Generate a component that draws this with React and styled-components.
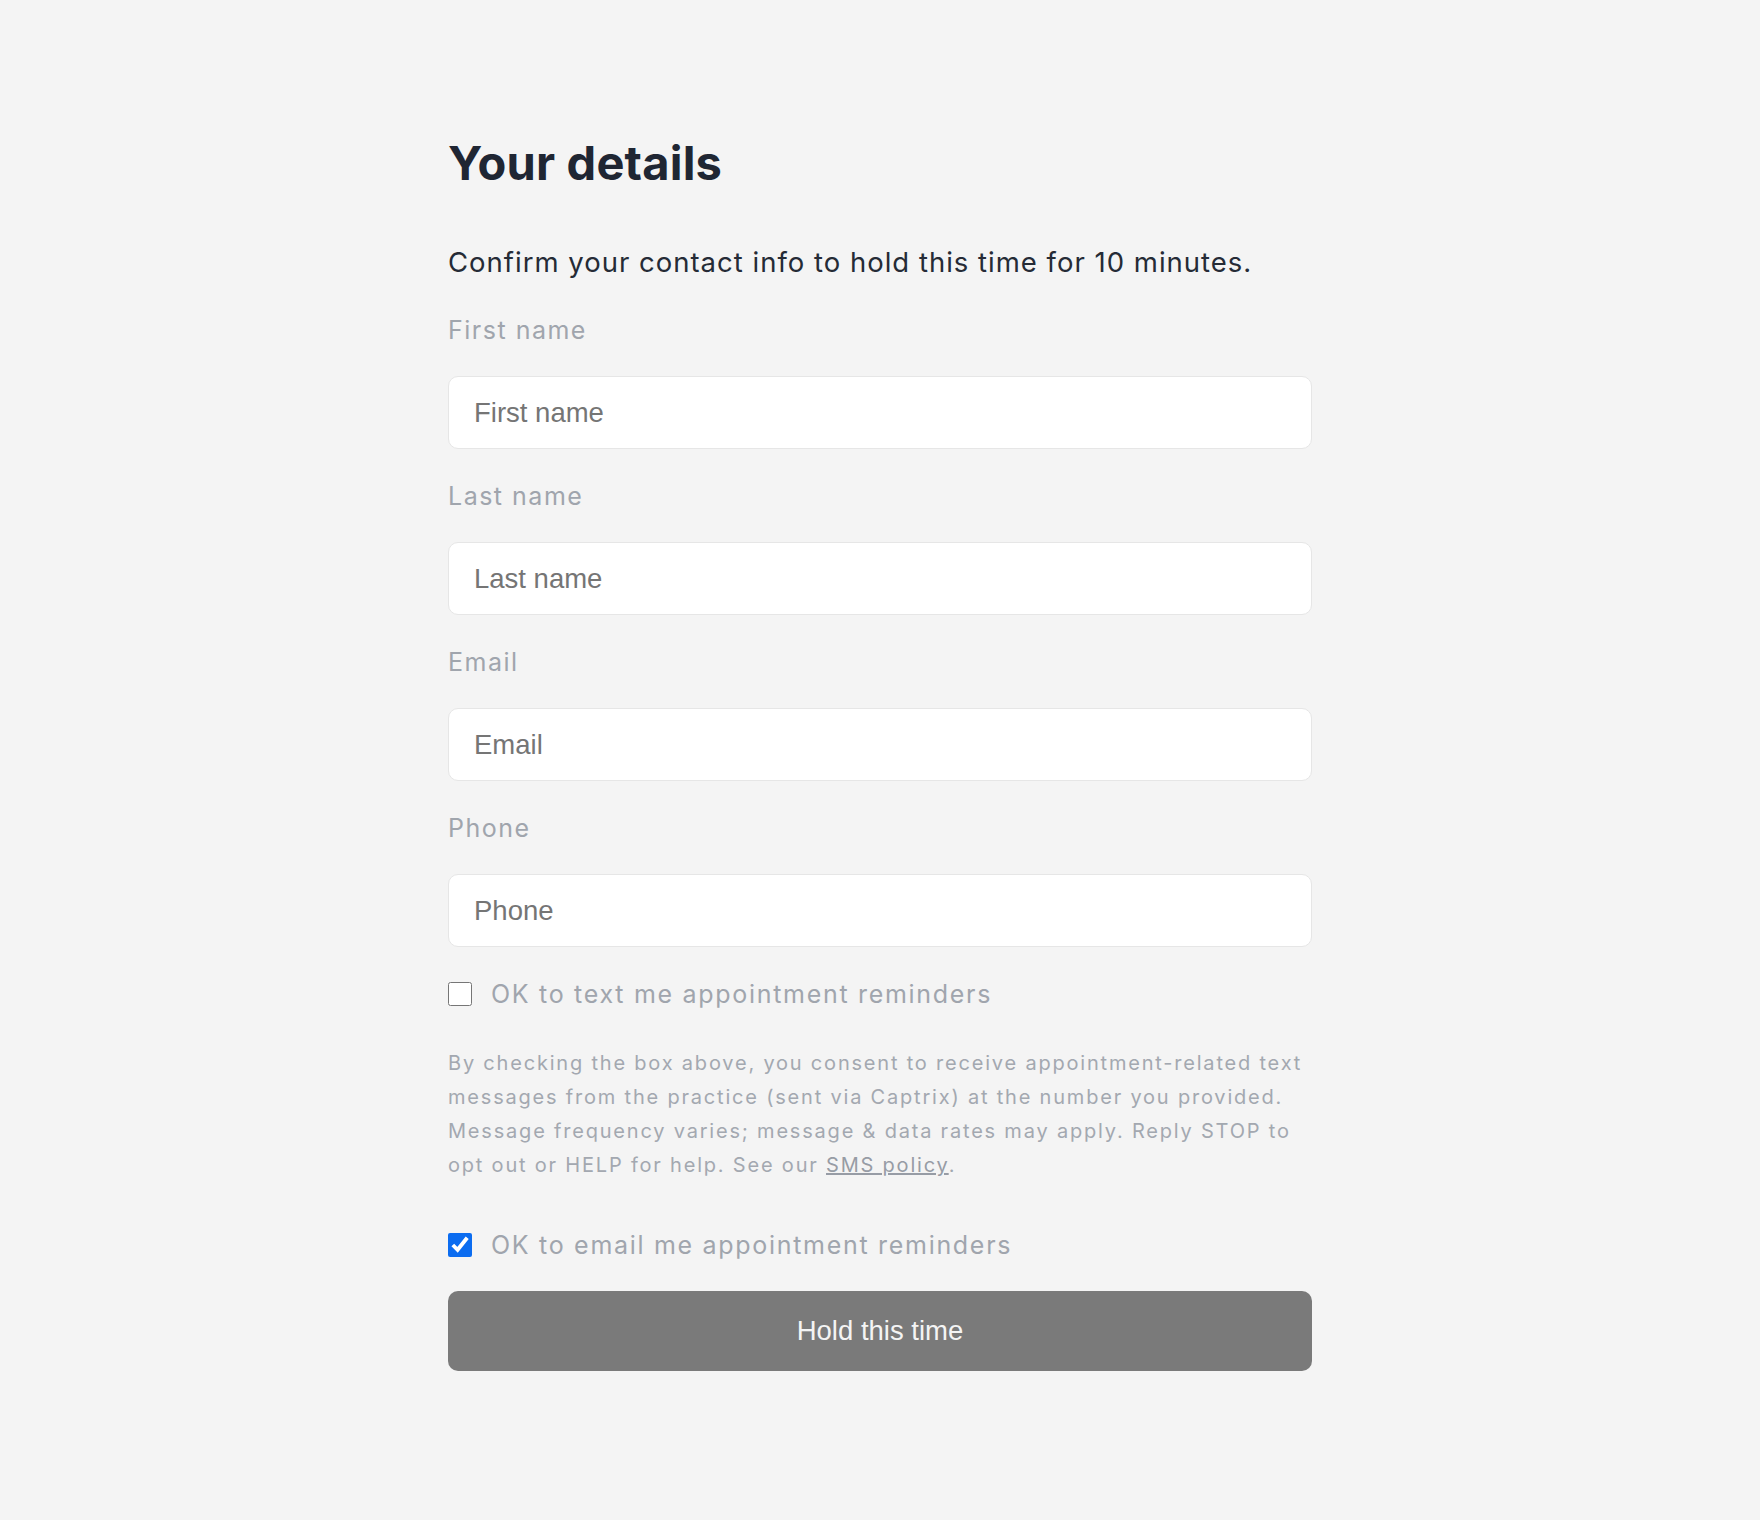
import React from 'react';
import styled, { createGlobalStyle } from 'styled-components';

const GlobalStyle = createGlobalStyle`
  html, body {
    margin: 0;
    padding: 0;
    background: #f4f4f4;
  }
  body {
    min-height: 1520px;
    font-family: Inter, "Noto Sans", sans-serif;
  }
`;

const Page = styled.main`
  width: 864px;
  margin: 0 auto;
  padding: 135px 0 140px;
  display: flex;
  flex-direction: column;
`;

const Title = styled.h1`
  margin: 0;
  font-size: 47px;
  line-height: 56px;
  font-weight: 700;
  letter-spacing: 0.2px;
  color: #1f2633;
`;

const Intro = styled.p`
  margin: 51px 0 0;
  font-size: 27.5px;
  line-height: 40px;
  letter-spacing: 1px;
  color: #252b36;
`;

const Fields = styled.div`
  margin-top: 32px;
  display: flex;
  flex-direction: column;
  gap: 31px;
`;

const Field = styled.label`
  display: flex;
  flex-direction: column;
  gap: 30px;
`;

const FieldLabel = styled.span`
  font-size: 25px;
  line-height: 32px;
  letter-spacing: 1.5px;
  color: #a0a5ad;
`;

const Input = styled.input`
  box-sizing: border-box;
  height: 73px;
  width: 100%;
  padding: 0 25px;
  border: 1px solid #e6e6e6;
  border-radius: 10px;
  background: #fff;
  font-family: "Liberation Sans", Arial, sans-serif;
  font-size: 27.5px;
  color: #222;
  outline: none;

  &::placeholder {
    color: #757575;
  }
`;

const CheckRow = styled.label`
  margin-top: ${p => p.$top}px;
  display: flex;
  align-items: center;
  gap: 19px;
  height: 32px;
  font-size: 25px;
  letter-spacing: 1.7px;
  color: #a0a5ad;
`;

const Check = styled.input`
  width: 24px;
  height: 24px;
  margin: 0;
  accent-color: #0b6cf0;
`;

const Consent = styled.p`
  margin: 36px 0 0;
  font-size: 20px;
  line-height: 34px;
  letter-spacing: 1.8px;
  white-space: nowrap;
  color: #a3a8b0;
`;

const PolicyLink = styled.a`
  color: #979ca5;
  text-decoration: underline;
`;

const SubmitButton = styled.button`
  margin-top: 30px;
  height: 80px;
  width: 100%;
  border: 0;
  border-radius: 10px;
  background: #7a7a7a;
  color: #f4f4f4;
  font-family: "Liberation Sans", Arial, sans-serif;
  font-size: 27.5px;
  cursor: default;
`;

const fields = ['First name', 'Last name', 'Email', 'Phone'];

export default function App() {
  return (
    <>
      <GlobalStyle />
      <Page>
        <Title>Your details</Title>
        <Intro>Confirm your contact info to hold this time for 10 minutes.</Intro>
        <Fields>
          {fields.map(name => (
            <Field key={name}>
              <FieldLabel>{name}</FieldLabel>
              <Input placeholder={name} type={name === 'Email' ? 'email' : 'text'} />
            </Field>
          ))}
        </Fields>
        <CheckRow $top={31}>
          <Check type="checkbox" />
          OK to text me appointment reminders
        </CheckRow>
        <Consent>
          By checking the box above, you consent to receive appointment-related text<br />
          messages from the practice (sent via Captrix) at the number you provided.<br />
          Message frequency varies; message &amp; data rates may apply. Reply STOP to<br />
          opt out or HELP for help. See our <PolicyLink href="#">SMS policy</PolicyLink>.
        </Consent>
        <CheckRow $top={47}>
          <Check type="checkbox" defaultChecked />
          OK to email me appointment reminders
        </CheckRow>
        <SubmitButton type="button">Hold this time</SubmitButton>
      </Page>
    </>
  );
}
